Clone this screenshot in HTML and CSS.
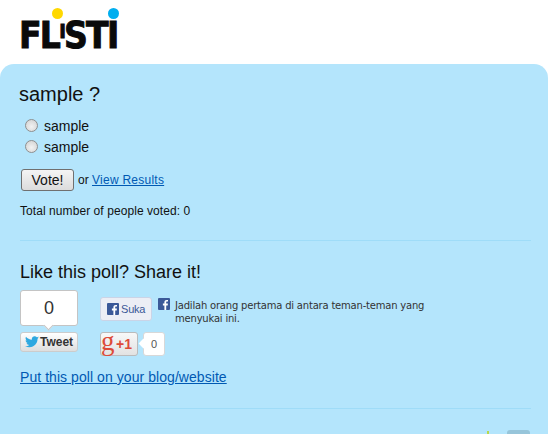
FILE: index.html
```html
<!DOCTYPE html>
<html lang="en">
<head>
<meta charset="utf-8">
<title>Flisti poll</title>
<link rel="stylesheet" href="styles.css">
</head>
<body>
<header class="site-header">
  <div class="logo"><span class="logo-text">FL<span class="logo-i">I</span>STI</span><i class="dot dot-yellow"></i><i class="dot dot-blue"></i></div>
</header>
<main class="panel">
  <h1 class="question">sample ?</h1>
  <div class="options">
    <label class="option"><span class="radio"></span>sample</label>
    <label class="option"><span class="radio"></span>sample</label>
  </div>
  <div class="vote-row">
    <button class="vote-btn" type="button">Vote!</button>
    <span class="or">or <a href="#">View Results</a></span>
  </div>
  <p class="total">Total number of people voted: 0</p>
  <hr class="rule rule-first">
  <h2 class="share-title">Like this poll? Share it!</h2>
  <div class="share">
    <div class="tweet-col">
      <div class="tweet-count">0</div>
      <div class="tweet-btn">
        <svg class="bird" viewBox="0 0 24 20" width="14" height="12"><path fill="#2fa8e0" d="M24 2.400c-.9.400-1.800.7-2.800.8 1-.6 1.800-1.600 2.200-2.700-1 .6-2 1-3.100 1.200C19.300.7 18 0 16.600 0c-2.700 0-4.900 2.200-4.900 4.900 0 .4 0 .8.100 1.100C7.700 5.800 4.100 3.900 1.700.9c-.4.700-.7 1.600-.7 2.500 0 1.700.9 3.200 2.200 4.100-.8 0-1.600-.2-2.200-.6v.1c0 2.400 1.700 4.400 3.900 4.800-.4.100-.8.200-1.300.2-.3 0-.6 0-.9-.1.600 2 2.400 3.400 4.600 3.400-1.700 1.300-3.800 2.100-6.100 2.100-.4 0-.8 0-1.200-.1C2.200 18.200 4.800 19 7.500 19c9.100 0 14-7.500 14-14v-.6c1-.7 1.800-1.500 2.500-2z"/></svg>
        <span>Tweet</span>
      </div>
    </div>
    <div class="social-col">
      <div class="fb-row">
        <div class="fb-btn">
          <svg class="fb-icon" viewBox="0 0 12 12" width="12" height="12"><rect width="12" height="12" rx="1" fill="#3b5998"/><path fill="#fff" d="M8.200 12V7.400h1.500l.2-1.800H8.200V4.500c0-.5.200-.9.900-.9h.9V2c-.2 0-.7-.1-1.300-.1-1.400 0-2.300.8-2.300 2.400v1.300H4.900v1.800h1.500V12z"/></svg>
          <span class="suka">Suka</span>
        </div>
        <svg class="fb-icon fb-side" viewBox="0 0 12 12" width="12" height="12"><rect width="12" height="12" rx="1" fill="#3b5998"/><path fill="#fff" d="M8.200 12V7.400h1.500l.2-1.800H8.200V4.500c0-.5.200-.9.900-.9h.9V2c-.2 0-.7-.1-1.300-.1-1.400 0-2.300.8-2.300 2.400v1.300H4.900v1.800h1.500V12z"/></svg>
        <p class="fb-text">Jadilah orang pertama di antara teman-teman yang menyukai ini.</p>
      </div>
      <div class="gplus-row">
        <div class="gplus-btn"><span class="g">g</span><span class="plus">+1</span></div>
        <div class="gplus-count">0</div>
      </div>
    </div>
  </div>
  <a class="embed" href="#">Put this poll on your blog/website</a>
  <hr class="rule rule-second">
  <div class="corner"><i class="leaf"></i><i class="grey-tab"></i></div>
</main>
</body>
</html>
```
FILE: styles.css
```css
* { box-sizing: border-box; }
html, body { margin: 0; padding: 0; }
body {
  width: 548px;
  height: 434px;
  overflow: hidden;
  background: #fff;
  font-family: "Liberation Sans", Arial, sans-serif;
  color: #111;
}
.site-header { height: 64px; padding: 8px 0 0 20px; }
.logo { position: relative; width: 100px; height: 42px; }
.logo-text {
  position: absolute;
  left: -1px;
  top: 5px;
  font-family: "DejaVu Sans", sans-serif;
  font-weight: 700;
  font-size: 37px;
  line-height: 36px;
  letter-spacing: -2px;
  white-space: nowrap;
  color: #0a0a0a;
  -webkit-text-stroke: 1px #0a0a0a;
  transform: scaleX(.895);
  transform-origin: left center;
}
.logo-i { font-size: 20px; vertical-align: 10px; }
.dot { position: absolute; width: 11px; height: 11px; border-radius: 50%; top: 0; }
.dot-yellow { left: 32px; background: #ffd800; }
.dot-blue { left: 88px; background: #00aeef; }
.panel {
  height: 370px;
  background: #b4e5fc;
  border-radius: 14px 14px 0 0;
  padding: 17px 17px 0 20px;
  position: relative;
}
.question { margin: 0 0 0 -1px; font-size: 20px; font-weight: 400; line-height: 26px; }
.options { margin: 8px 0 0 5px; }
.option { display: flex; align-items: center; height: 21px; font-size: 14px; }
.radio {
  width: 13px;
  height: 13px;
  margin-right: 6px;
  border-radius: 50%;
  border: 1px solid #8f8f8f;
  background: radial-gradient(circle at 50% 60%, #f2f2f2, #cfcfcf);
}
.vote-row { display: flex; align-items: center; margin-top: 12px; height: 22px; }
.vote-btn {
  width: 53px;
  height: 22px;
  margin: 0 4px 0 1px;
  padding: 0;
  font: 14px "Liberation Sans", Arial, sans-serif;
  color: #111;
  border: 1px solid #707070;
  border-radius: 3px;
  background: linear-gradient(#f4f4f4, #dcdcdc);
}
.or { font-size: 12px; }
.or a { letter-spacing: .25px; }
.or a, .embed { color: #0059b3; text-decoration: underline; }
.total { margin: 12px 0 0; font-size: 12px; line-height: 16px; letter-spacing: .07px; }
.rule { margin: 0; border: 0; height: 1px; background: #9fdcf8; }
.rule-first { margin-top: 21px; }
.share-title { margin: 21px 0 0; font-size: 18px; font-weight: 400; line-height: 20px; }
.share { display: flex; margin-top: 8px; }
.tweet-col { width: 80px; }
.tweet-count {
  position: relative;
  width: 58px;
  height: 36px;
  background: #fff;
  border: 1px solid #c4c4c4;
  border-radius: 3px;
  font-size: 18px;
  line-height: 34px;
  text-align: center;
  color: #333;
}
.tweet-count::after {
  content: "";
  position: absolute;
  left: 24px;
  bottom: -4px;
  width: 6px;
  height: 6px;
  background: #fff;
  border-right: 1px solid #c4c4c4;
  border-bottom: 1px solid #c4c4c4;
  transform: rotate(45deg);
}
.tweet-btn {
  display: flex;
  align-items: center;
  width: 58px;
  height: 20px;
  margin-top: 6px;
  padding-left: 4px;
  gap: 1px;
  border: 1px solid #ccc;
  border-radius: 3px;
  background: linear-gradient(#fff, #dedede);
  font-size: 12px;
  font-weight: 700;
  color: #333;
}
.social-col { width: 340px; }
.fb-row { display: flex; align-items: flex-start; height: 35px; margin-top: 7px; }
.fb-btn {
  display: flex;
  align-items: center;
  gap: 2px;
  width: 52px;
  height: 24px;
  padding-left: 6px;
  background: #eceef5;
  border: 1px solid #cad4e7;
  border-radius: 3px;
  font-size: 11px;
  color: #3b5998;
}
.suka { letter-spacing: -.2px; }
.fb-side { margin: 1px 0 0 6px; flex: none; }
.fb-text { margin: 2px 0 0 5px; width: 265px; font-size: 10px; line-height: 13px; color: #333; font-family: "DejaVu Sans", sans-serif; letter-spacing: -.2px; }
.gplus-row { display: flex; align-items: center; gap: 5px; }
.gplus-btn {
  display: flex;
  width: 38px;
  height: 24px;
  border: 1px solid #bbb;
  border-radius: 3px;
  background: linear-gradient(#f8f8f8, #e2e2e2);
  color: #dd4b39;
}
.g { font: 400 27px/17px "Liberation Serif", serif; width: 14px; }
.plus { font-size: 14px; font-weight: 700; line-height: 22px; margin-left: 1px; }
.gplus-count {
  position: relative;
  width: 22px;
  height: 24px;
  background: #fff;
  border: 1px solid #d8d8d8;
  border-radius: 3px;
  text-align: center;
  font-size: 11px;
  line-height: 23px;
  color: #555;
}
.gplus-count::before {
  content: "";
  position: absolute;
  left: -4px;
  top: 7px;
  width: 7px;
  height: 7px;
  background: #fff;
  transform: rotate(45deg);
}
.embed { display: block; margin-top: 12px; font-size: 14px; line-height: 18px; letter-spacing: .06px; }
.rule-second { margin-top: 22px; }
.corner { position: absolute; right: 0; bottom: 0; width: 100px; height: 4px; }
.leaf { position: absolute; left: 39px; bottom: 0; width: 2px; height: 3px; background: #b8d84a; }
.grey-tab { position: absolute; left: 59px; bottom: 0; width: 23px; height: 4px; background: #97c5da; border-radius: 3px 3px 0 0; }
```
